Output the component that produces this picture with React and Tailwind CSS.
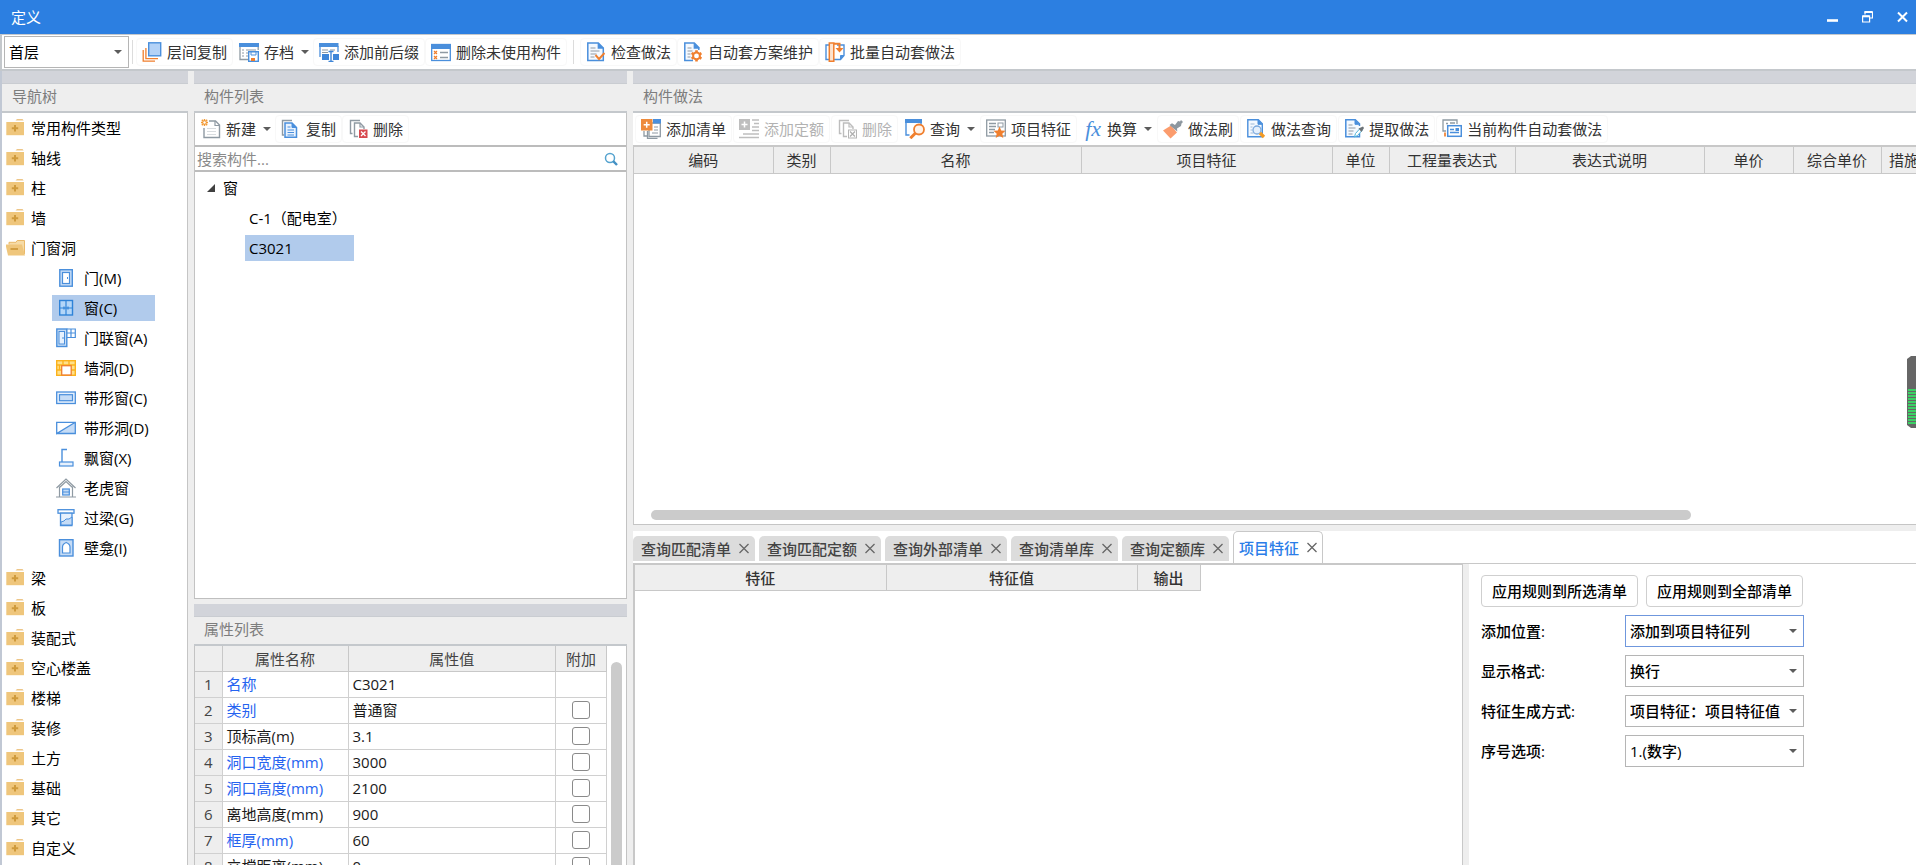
import React from "react";

const B = "#4a8fdc";
const L = "#c6dcf6";
const G = "#8f9aa3";
const O = "#f07f2e";

function Svg({ children, size = 20 }) {
  return (
    <svg width={size} height={size} viewBox={`0 0 ${size} ${size}`} fill="none" aria-hidden="true" className="shrink-0">
      {children}
    </svg>
  );
}

const icons = {
  layers: (
    <Svg>
      <path d="M1.200 8v11.200H13" stroke={O} strokeWidth="1.300" />
      <path d="M3.900 6v10.700H16" stroke={O} strokeWidth="1.300" />
      <rect x="6.700" y=".8" width="12" height="13" fill="#b3d2f7" stroke={B} strokeWidth="1.400" />
    </Svg>
  ),
  archive: (
    <Svg>
      <path d="M1 3v14.500h8M19.200 3v5" stroke={G} strokeWidth="1.300" />
      <rect x="0" y="1" width="20" height="4" fill={B} />
      <path d="M3 8h2M7 8h10M3 11h2M7 11h3M3 14h2M7 14h2" stroke={G} strokeWidth="1.200" />
      <rect x="9.700" y="9.700" width="9.600" height="9.600" fill="#fff" stroke={B} strokeWidth="1.400" />
      <path d="M12 10h5v3h-5z" fill="#fff" stroke={B} />
      <path d="M12 16h4v3h-4z" fill={O} />
    </Svg>
  ),
  affix: (
    <Svg>
      <path d="M1 4v11M19 4v6" stroke={B} strokeWidth="1.300" />
      <rect x="0" y="1" width="19.500" height="4" fill={B} />
      <path d="M3 8h6M11 8h5M3 10.500h6" stroke={G} strokeWidth="1.200" />
      <rect x="3" y="12" width="7" height="6" fill="#3f86d8" />
      <rect x="14" y="12" width="6" height="6" fill="#3f86d8" />
      <path d="M9.500 9.500h5M9.500 19.500h5M12 9.500v10" stroke="#3f86d8" strokeWidth="1.400" />
    </Svg>
  ),
  listDelete: (
    <Svg>
      <rect x=".7" y="2.500" width="18.600" height="16" fill="#fff" stroke={B} strokeWidth="1.300" />
      <rect x="0" y="2" width="20" height="5" fill={B} />
      <path d="M3 9l3 3M6 9l-3 3M3 14l3 3M6 14l-3 3" stroke={O} strokeWidth="1.200" />
      <path d="M9 10.500h8M9 15.500h8" stroke={G} strokeWidth="1.300" />
    </Svg>
  ),
  check: (
    <Svg>
      <path d="M1.800 1h10.500l5 5v12.500H1.800z" fill="#f4f9ff" stroke={B} strokeWidth="1.500" />
      <path d="M12.300 1v5h5" fill={B} stroke={B} strokeWidth="1.300" />
      <path d="M4.500 6h5M4.500 9h9M4.500 12h6M4.500 15h4" stroke={G} strokeWidth="1.200" />
      <path d="M9.500 13l3.500 4 5.500-6" stroke={O} strokeWidth="1.900" />
    </Svg>
  ),
  gear: (
    <Svg>
      <path d="M10 18.500H1.800V1h9.500l4.500 4.500V8" fill="#f4f9ff" stroke={B} strokeWidth="1.500" />
      <path d="M11.300 1v5h5" fill={B} stroke={B} strokeWidth="1.300" />
      <path d="M4.500 6h4M4.500 9h5M4.500 12h3M4.500 15h3" stroke={G} strokeWidth="1.200" />
      <path d="M13.500 8.200v2.300M13.500 17.300v2.300M8.600 11l2 1.200M16.400 15.400l2 1.200M8.600 16.700l2-1.200M16.400 12.300l2-1.200" stroke={O} strokeWidth="2.600" />
      <circle cx="13.500" cy="13.900" r="3.400" fill="#fff" stroke={O} strokeWidth="2" />
    </Svg>
  ),
  batch: (
    <Svg>
      <path d="M4 3H1v14.500h3M12 3h7v10.500l-3.500 4H9" fill="none" stroke={B} strokeWidth="1.400" />
      <path d="M15.500 17.500v-4h3.500" fill={B} stroke={B} />
      <path d="M4.300 19.200V1h4.500v18.200z" fill="#fde3cf" stroke={O} strokeWidth="1.500" />
      <path d="M9 1.800h5.500V7" stroke={O} strokeWidth="2" />
      <path d="M10.500 6h8l-4 4.500z" fill={O} />
    </Svg>
  ),
  create: (
    <Svg>
      <path d="M8 2h6.500l4 4v12.500H3V9" fill="#fff" stroke={G} strokeWidth="1.400" />
      <path d="M14 2v4.500h4.500" stroke={G} strokeWidth="1.200" />
      <path d="M6 9.500h9M6 12.500h9M6 15.500h9" stroke="#d8dcdf" strokeWidth="1.200" />
      <path d="M.8.800l5.400 5.400M6.200.8L.8 6.200M3.500 0v7M0 3.500h7" stroke="#f39a35" strokeWidth="1.400" />
      <circle cx="3.500" cy="3.500" r="1.200" fill="#fff" />
    </Svg>
  ),
  copy: (
    <Svg>
      <path d="M3 16H1.500V1.500H11" stroke={G} strokeWidth="1.400" />
      <path d="M4 4h7l4.500 4.500v9.800H4z" fill="#eaf3fe" stroke={B} strokeWidth="1.500" />
      <path d="M11 4v4.500h4.500" fill={B} stroke={B} />
      <path d="M6.500 8h3M6.500 11h6.500M6.500 13.500h6.500M6.500 16h6.500" stroke={B} strokeWidth="1.200" />
    </Svg>
  ),
  remove: (
    <Svg>
      <path d="M4.500 14.500h-2V1.500H12" stroke={G} strokeWidth="1.400" />
      <path d="M10 17.500H6.500V4H12l4 4v2" fill="#fff" stroke={G} strokeWidth="1.400" />
      <path d="M12 4v4h4" stroke={G} strokeWidth="1.200" />
      <rect x="11" y="10.500" width="8.500" height="8.500" fill="#d7494f" />
      <path d="M13 12.500l4.500 4.500M17.500 12.500L13 17" stroke="#fff" strokeWidth="1.300" />
    </Svg>
  ),
  removeOff: (
    <Svg>
      <path d="M4.500 14.500h-2V1.500H12" stroke="#bdbdbd" strokeWidth="1.400" />
      <path d="M10 17.500H6.500V4H12l4 4v2" fill="#fff" stroke="#bdbdbd" strokeWidth="1.400" />
      <path d="M12 4v4h4" stroke="#bdbdbd" strokeWidth="1.200" />
      <rect x="11.500" y="11" width="8" height="8" fill="#fff" stroke="#b5b5b5" />
      <path d="M13 12.500l5 5M18 12.500l-5 5" stroke="#b0b0b0" strokeWidth="1.300" />
    </Svg>
  ),
  addList: (
    <Svg>
      <path d="M6.500 12v7.300h10M3 12v5h3" stroke={G} strokeWidth="1.300" />
      <path d="M8 4h11.300v13.500H8z" fill="#fff" stroke={G} strokeWidth="1.300" />
      <rect x="12" y="0" width="8" height="4.500" fill={B} />
      <path d="M13 8h4M13 11h4M11 14h6" stroke={G} strokeWidth="1.200" />
      <rect x="0" y="0" width="11.500" height="11.500" fill="#ee8b3c" />
      <path d="M5.700 2.700v6M2.700 5.700h6" stroke="#fff" strokeWidth="1.500" />
    </Svg>
  ),
  addQuota: (
    <Svg>
      <rect x="0" y="0" width="11" height="11" fill="#bebebe" />
      <path d="M5.500 2.500v6M2.500 5.500h6" stroke="#fff" strokeWidth="1.500" />
      <path d="M13 1h7M15 4.500h5M13 8h7M13 11.500h7M4 15h16M0 18.500h20" stroke="#bebebe" strokeWidth="1.400" />
    </Svg>
  ),
  query: (
    <Svg>
      <path d="M1 4v12h3.500M16 4v2" stroke={B} strokeWidth="1.400" />
      <rect x="0" y="0" width="17" height="4" fill={B} />
      <circle cx="14" cy="10.500" r="5" fill="#fff3ea" stroke={O} strokeWidth="1.800" />
      <path d="M10.300 14.200l-5 5" stroke={O} strokeWidth="3" />
    </Svg>
  ),
  feature: (
    <Svg>
      <rect x=".7" y="1" width="18.600" height="16" fill="#fff" stroke={G} strokeWidth="1.300" />
      <path d="M3 4.500h7M3 7.500h7M3 10.500h6M3 13.500h5" stroke={G} strokeWidth="1.300" />
      <rect x="12" y="4" width="5" height="4" stroke={G} />
      <path d="M13.500 7.500l1.700 3.900 4.300.4-3.200 2.900 1 4.300-3.800-2.300-3.800 2.300 1-4.300-3.200-2.900 4.300-.4z" fill={O} />
    </Svg>
  ),
  brush: (
    <Svg>
      <path d="M0 11.500l8-5 6 7-6.500 6z" fill="#fb9c6d" />
      <path d="M6.500 6l2.500-1.800 3 1.800L15 2l2 .5L18 1l2 2-1.500 1.500L18 7l-4 2.500.3 3z" fill="#8d979f" />
    </Svg>
  ),
  methodQuery: (
    <Svg>
      <path d="M1.800.8h10.500l4 4v12.900H1.800z" fill="#f4f9ff" stroke={B} strokeWidth="1.400" />
      <path d="M12 .8v4.500h4.500" fill={B} stroke={B} />
      <path d="M4.500 5h4M4.500 8h2M4.500 11h2M4.500 14h3" stroke="#9db9d8" strokeWidth="1.200" />
      <circle cx="11" cy="11" r="4" fill="#e4effc" stroke="#7ba9dd" strokeWidth="1.300" />
      <path d="M14 14l4 4" stroke="#f39a24" strokeWidth="3.200" />
    </Svg>
  ),
  extract: (
    <Svg>
      <path d="M15.500 14v3.700H1.800V.8h9.500l4.200 4V7" fill="#f4f9ff" stroke={B} strokeWidth="1.500" />
      <path d="M11 .8v4.500h4.500" fill={B} stroke={B} />
      <path d="M4.500 6h4M4.500 9h7M4.500 12h5M4.500 15h4" stroke={G} strokeWidth="1.200" />
      <path d="M10.500 18l1-3.500 4.500-5 2 2-4.500 5z" fill="#fff" stroke="#52b5d8" />
      <path d="M14.500 9.500l4.500-2 1 1.500-2.500 4z" fill="#6b7277" />
    </Svg>
  ),
  current: (
    <Svg>
      <path d="M4 12H1V1h14v4" stroke={G} strokeWidth="1.300" />
      <path d="M4 4.500h2M8 4h5" stroke={G} strokeWidth="1.500" />
      <rect x="5.700" y="6.700" width="13.600" height="10.600" fill="#fff" stroke={B} strokeWidth="1.500" />
      <path d="M8 10.500h4M8 13.500h9" stroke={B} strokeWidth="1.300" />
      <rect x="13.500" y="9" width="3.500" height="3" fill={B} />
      <path d="M3 13.500v4" stroke={O} strokeWidth="1.700" />
    </Svg>
  ),
  door: (
    <Svg>
      <rect x="3.800" y="1.700" width="12.500" height="16.500" fill={L} stroke={B} strokeWidth="1.400" />
      <rect x="6.500" y="4.500" width="7" height="11" fill="#fff" stroke={B} strokeWidth="1.200" />
      <path d="M11.500 9v2" stroke={B} />
    </Svg>
  ),
  window: (
    <Svg>
      <rect x="3.700" y="2.500" width="12.800" height="14.500" fill="#b3d6f8" stroke="#2f83d8" strokeWidth="1.400" />
      <path d="M10 2.500V17M3.700 10h12.800M8 8.500v3M12 8.500v3" stroke="#2f83d8" strokeWidth="1.200" />
    </Svg>
  ),
  doorWindow: (
    <Svg>
      <rect x=".8" y="1" width="10" height="17.500" fill={L} stroke={B} strokeWidth="1.400" />
      <rect x="3" y="3.500" width="5.500" height="12.500" fill="#e7f1fd" stroke={B} />
      <path d="M7 9v2" stroke={B} />
      <path d="M10.800 1h8.500v8.500h-8.500M15 1v8.500M10.800 5h8.500" stroke={B} strokeWidth="1.200" />
    </Svg>
  ),
  wallHole: (
    <Svg>
      <rect x=".7" y="2.700" width="18.600" height="14.600" fill="#ffe08a" stroke="#fbb21c" strokeWidth="1.400" />
      <path d="M0 7h20M0 12h20M7 2.500V7M13 2.500V7M3.500 7v5" stroke="#fbb21c" strokeWidth="1.300" />
      <rect x="5.700" y="7.700" width="9.500" height="9.300" fill="#fff" stroke={O} strokeWidth="1.300" />
    </Svg>
  ),
  stripWindow: (
    <Svg>
      <rect x=".7" y="4" width="18.600" height="11.500" fill="#e7f1fd" stroke={B} strokeWidth="1.300" />
      <rect x="3.500" y="6.700" width="13" height="6" fill={L} stroke={B} strokeWidth="1.200" />
    </Svg>
  ),
  stripHole: (
    <Svg>
      <path d="M19.300 4.300v11.200H.7z" fill={L} />
      <path d="M.7 4.300h18.600v11.200H.7zL.7 15.500 19.300 4.300" stroke={B} strokeWidth="1.300" />
    </Svg>
  ),
  bay: (
    <Svg>
      <path d="M11 1.500H6V14" stroke={B} strokeWidth="1.400" />
      <rect x="3.500" y="14" width="13.500" height="4" fill="#e7f1fd" stroke={B} strokeWidth="1.200" />
    </Svg>
  ),
  dormer: (
    <Svg>
      <path d="M.5 10L10 1l9.500 9M3.500 8.500V19M16.500 8.500V19M0 19h20M3.500 9.500L10 3.500l6.500 6" stroke={G} strokeWidth="1.200" />
      <rect x="6.700" y="11" width="6.600" height="6" fill={L} stroke={B} strokeWidth="1.200" />
      <path d="M6.700 14h6.600" stroke={B} />
    </Svg>
  ),
  lintel: (
    <Svg>
      <rect x="2" y="1.700" width="16" height="3.500" fill="#fff" stroke={B} strokeWidth="1.300" />
      <path d="M4.500 5.200h11.500V17.500H4.500z" fill="#e7f1fd" stroke={B} strokeWidth="1.300" />
      <path d="M5 14l3-1 2-2h3l3-2v8H5z" fill={L} stroke={B} />
    </Svg>
  ),
  niche: (
    <Svg>
      <rect x="3.500" y="1.700" width="13.500" height="16.300" fill={L} stroke={B} strokeWidth="1.400" />
      <path d="M6.500 15V9c0-2.500 2.500-4 3.700-4.500C11.500 5 14 6.500 14 9v6z" fill="#fff" stroke={B} strokeWidth="1.200" />
    </Svg>
  ),
  folder: (
    <Svg>
      <path d="M9.500 2.400L11 1h5.500l1.200 1.400z" fill="#edc688" />
      <path d="M.3 6.500V4H18v13.200H.3z" fill="#efc67c" />
      <path d="M9 7v6.500M5.800 10.200h6.400" stroke="#cf9a3c" strokeWidth="2" />
    </Svg>
  ),
  folderOpen: (
    <Svg>
      <path d="M3 6.500V4.300h7l1.200-1.800h7.300V16" fill="#f6dba6" stroke="#e9b868" />
      <path d="M-.5 6.500H16l3 11H2z" fill="#efc67c" />
      <path d="M4.500 11H12" stroke="#cf9a3c" strokeWidth="1.800" />
    </Svg>
  ),
};

function Caret() {
  return <span className="ml-0.5 h-0 w-0 border-x-[4px] border-t-[4px] border-x-transparent border-t-[#5c5c5c]" />;
}

function Tool({ icon, fx, children, menu, disabled }) {
  return (
    <button
      type="button"
      disabled={disabled}
      className={
        "flex h-7 shrink-0 items-center gap-[5px] whitespace-nowrap rounded border pl-[5px] " +
        (menu ? "border-transparent pr-[3px] " : "border-[#f8f8f8] pr-[5px] ") +
        (disabled ? "text-[#b2b2b2]" : "text-[#333]")
      }
    >
      {fx ? (
        <i className="w-[18px] text-center font-['Liberation_Serif',serif] text-[22px] leading-5 text-[#4a8fdc]">fx</i>
      ) : (
        icons[icon]
      )}
      <span>{children}</span>
      {menu && <Caret />}
    </button>
  );
}

function PanelHead({ children }) {
  return (
    <div className="shrink-0">
      <div className="h-[13px] border-b border-[#c9ccd1] bg-[#d2d4da]" />
      <h2 className="flex h-[27px] items-center bg-[#eee] pb-[3px] pl-2.5 text-[#7d7d7d]">{children}</h2>
      <div className="h-0.5 bg-[#c4c8cc]" />
    </div>
  );
}

function Select({ label, id, value, className }) {
  return (
    <div className={"relative " + className}>
      <select id={id} aria-label={label} className="h-full w-full appearance-none bg-white pl-1 pr-5 outline-none">
        <option>{value}</option>
      </select>
      <span className="pointer-events-none absolute right-1.5 top-1/2 -mt-0.5 h-0 w-0 border-x-[4px] border-t-[4px] border-x-transparent border-t-[#5c5c5c]" />
    </div>
  );
}

const nav = [
  ["常用构件类型"],
  ["轴线"],
  ["柱"],
  ["墙"],
  [
    "门窗洞",
    [
      ["door", "门(M)"],
      ["window", "窗(C)"],
      ["doorWindow", "门联窗(A)"],
      ["wallHole", "墙洞(D)"],
      ["stripWindow", "带形窗(C)"],
      ["stripHole", "带形洞(D)"],
      ["bay", "飘窗(X)"],
      ["dormer", "老虎窗"],
      ["lintel", "过梁(G)"],
      ["niche", "壁龛(I)"],
    ],
  ],
  ["梁"],
  ["板"],
  ["装配式"],
  ["空心楼盖"],
  ["楼梯"],
  ["装修"],
  ["土方"],
  ["基础"],
  ["其它"],
  ["自定义"],
];

const props = [
  ["名称", "C3021", true],
  ["类别", "普通窗", true],
  ["顶标高(m)", "3.1", false],
  ["洞口宽度(mm)", "3000", true],
  ["洞口高度(mm)", "2100", true],
  ["离地高度(mm)", "900", false],
  ["框厚(mm)", "60", true],
  ["立樘距离(mm)", "0", false],
];

const tabs = ["查询匹配清单", "查询匹配定额", "查询外部清单", "查询清单库", "查询定额库", "项目特征"];

const options = [
  ["添加位置:", "添加到项目特征列", "pos"],
  ["显示格式:", "换行", "fmt"],
  ["特征生成方式:", "项目特征：项目特征值", "gen"],
  ["序号选项:", "1.(数字)", "seq"],
];

function NavPanel() {
  return (
    <nav className="flex w-[188px] shrink-0 flex-col border-l-2 border-[#c1c8d4]">
      <PanelHead>导航树</PanelHead>
      <ul className="min-h-0 flex-1 overflow-hidden border-r border-[#c5c5c5] bg-white text-black">
        {nav.map(([name, kids]) => (
          <li key={name}>
            <button type="button" className="flex h-[30px] items-center gap-[5px] pl-1">
              {icons[kids ? "folderOpen" : "folder"]}
              <span>{name}</span>
            </button>
            {kids && (
              <ul>
                {kids.map(([icon, text]) => (
                  <li key={text} className="flex h-[30px] items-center pl-[50px]">
                    <button
                      type="button"
                      className={"flex h-[26px] items-center gap-2 pl-1 " + (icon === "window" ? "w-[103px] bg-[#b1cbec]" : "")}
                    >
                      {icons[icon]}
                      <span>{text}</span>
                    </button>
                  </li>
                ))}
              </ul>
            )}
          </li>
        ))}
      </ul>
    </nav>
  );
}

function ComponentList() {
  return (
    <section className="flex min-h-0 flex-[528] flex-col border-b border-[#bfbfbf]">
      <PanelHead>构件列表</PanelHead>
      <div className="flex min-h-0 flex-1 flex-col border-x border-[#c3c3c3] bg-white">
        <div className="flex h-8 shrink-0 items-center">
          <Tool icon="create" menu>新建</Tool>
          <Tool icon="copy">复制</Tool>
          <Tool icon="remove">删除</Tool>
        </div>
        <div className="flex h-[27px] shrink-0 items-center border-y-2 border-[#bcbcbc] pl-0.5 pr-2">
          <input
            type="text"
            aria-label="搜索构件"
            placeholder="搜索构件..."
            className="min-w-0 flex-1 bg-transparent outline-none placeholder:text-[#8a8a8a]"
          />
          <button type="button" aria-label="搜索">
            <Svg size={14}>
              <circle cx="6" cy="6" r="4.500" stroke="#55a3cf" strokeWidth="1.500" />
              <path d="M9.200 9.200l3.800 3.800" stroke="#4390c4" strokeWidth="2.400" />
            </Svg>
          </button>
        </div>
        <ul className="pt-px text-black">
          <li>
            <div className="flex h-[30px] items-center gap-2 pl-3">
              <svg width="8" height="8" viewBox="0 0 8 8" aria-hidden="true">
                <path d="M8 0v8H0z" fill="#404040" />
              </svg>
              <span>窗</span>
            </div>
            <ul className="pl-[50px]">
              <li className="flex h-[30px] items-center pl-1">C-1（配电室）</li>
              <li className="flex h-[30px] items-center">
                <span className="flex h-[26px] w-[109px] items-center bg-[#b1cbec] pl-1">C3021</span>
              </li>
            </ul>
          </li>
        </ul>
      </div>
    </section>
  );
}

function PropertyList() {
  return (
    <section className="flex min-h-0 flex-[261] flex-col">
      <PanelHead>属性列表</PanelHead>
      <div className="flex min-h-0 flex-1 overflow-hidden border-x border-[#c3c3c3] bg-white">
        <div className="min-w-0 flex-1">
          <table className="w-full table-fixed border-collapse text-[#1a1a1a]">
            <colgroup>
              <col className="w-[27px]" />
              <col className="w-[126px]" />
              <col />
              <col className="w-[51px]" />
            </colgroup>
            <thead>
              <tr className="h-[25px] bg-[#eee] text-[#444]">
                {["", "属性名称", "属性值", "附加"].map((h, i) => (
                  <th key={i} className="border-b border-r border-[#c8c8c8] p-0 font-normal">{h}</th>
                ))}
              </tr>
            </thead>
            <tbody>
              {props.map(([name, value, blue], i) => (
                <tr key={name} className="h-[26px]">
                  <td className="border-b border-r border-[#d0d0d0] bg-[#eee] p-0 text-center text-[#444]">{i + 1}</td>
                  <td className={"border-b border-r border-[#d0d0d0] p-0 pl-1 " + (blue ? "text-[#2563f0]" : "")}>{name}</td>
                  <td className="border-b border-r border-[#d0d0d0] p-0 pl-1">{value}</td>
                  <td className="border-b border-r border-[#d0d0d0] p-0">
                    {i > 0 && (
                      <input
                        type="checkbox"
                        aria-label={name}
                        className="mx-auto block h-[18px] w-[18px] appearance-none rounded-[3px] border border-[#8a8a8a] bg-white"
                      />
                    )}
                  </td>
                </tr>
              ))}
            </tbody>
          </table>
        </div>
        <div className="flex w-[19px] shrink-0 justify-center pt-4">
          <div className="w-[11px] rounded-t-full bg-[#cbcbcb]" />
        </div>
      </div>
    </section>
  );
}

const methodCols = [
  ["编码", "w-[139px]"],
  ["类别", "w-[57px]"],
  ["名称", "w-[251px]"],
  ["项目特征", "w-[251px]"],
  ["单位", "w-[57px]"],
  ["工程量表达式", "w-[126px]"],
  ["表达式说明", "w-[189px]"],
  ["单价", "w-[89px]"],
  ["综合单价", "w-[88px]"],
  ["措施项目", "w-[76px]"],
];

function MethodPanel() {
  return (
    <section className="flex min-h-0 flex-[454] flex-col border-b border-[#c5c5c5]">
      <PanelHead>构件做法</PanelHead>
      <div className="flex h-8 shrink-0 items-center gap-px overflow-hidden bg-white pl-0.5">
        <Tool icon="addList">添加清单</Tool>
        <Tool icon="addQuota" disabled>添加定额</Tool>
        <Tool icon="removeOff" disabled>删除</Tool>
        <Tool icon="query" menu>查询</Tool>
        <Tool icon="feature">项目特征</Tool>
        <Tool fx menu>换算</Tool>
        <Tool icon="brush">做法刷</Tool>
        <Tool icon="methodQuery">做法查询</Tool>
        <Tool icon="extract">提取做法</Tool>
        <Tool icon="current">当前构件自动套做法</Tool>
      </div>
      <div className="flex min-h-0 flex-1 flex-col justify-between overflow-hidden border-l border-t-2 border-[#c8c8c8] bg-white">
        <table className="w-max table-fixed border-collapse text-[#333]">
          <thead>
            <tr className="h-[26px] bg-[#eee]">
              {methodCols.map(([name, w]) => (
                <th key={name} className={"overflow-hidden whitespace-nowrap border-b border-r border-[#c8c8c8] p-0 font-normal " + w}>
                  {name}
                </th>
              ))}
            </tr>
          </thead>
        </table>
        <div className="mb-1 px-[17px]">
          <div className="h-2.5 w-5/6 rounded-full bg-[#cbcbcb]" />
        </div>
      </div>
    </section>
  );
}

function FeaturePanel() {
  return (
    <section className="flex min-h-0 flex-[334] flex-col bg-white font-medium">
      <div role="tablist" className="flex h-8 shrink-0 items-end gap-1">
        {tabs.map((t, i) => {
          const on = i === tabs.length - 1;
          return (
            <div
              key={t}
              className={
                "flex shrink-0 items-center gap-2 rounded-t-[5px] " +
                (on ? "h-8 border border-b-0 border-[#c8c8c8] px-[5px] text-[#2a7de8]" : "mb-0.5 h-[25px] bg-[#dcdcdc] pl-2 pr-1.5 text-[#444]")
              }
            >
              <button type="button" role="tab" aria-selected={on}>{t}</button>
              <button type="button" aria-label={"关闭" + t}>
                <svg width="10" height="11" viewBox="0 0 10 11" stroke="#666" strokeWidth="1.300" aria-hidden="true">
                  <path d="M.5 1l9 9M9.500 1l-9 9" />
                </svg>
              </button>
            </div>
          );
        })}
      </div>
      <div className="flex min-h-0 flex-1 border-t border-[#c8c8c8]">
        <div className="min-w-0 flex-1 overflow-hidden border-l-2 border-r border-t border-[#c8c8c8]">
          <table className="table-fixed border-collapse text-[#333]">
            <thead>
              <tr className="h-[25px] bg-[#eee]">
                <th className="w-[251px] border-b border-r border-[#c8c8c8] p-0 font-medium">特征</th>
                <th className="w-[251px] border-b border-r border-[#c8c8c8] p-0 font-medium">特征值</th>
                <th className="w-[63px] border-b border-r border-[#c8c8c8] p-0 font-medium">输出</th>
              </tr>
            </thead>
          </table>
        </div>
        <div className="w-1.5 shrink-0 bg-[#eee]" />
        <form className="flex w-[447px] shrink-0 flex-col gap-2 pl-3 pt-[11px] text-black">
          <div className="flex gap-2">
            <button type="button" className="h-8 w-[157px] rounded border border-[#cfcfcf]">应用规则到所选清单</button>
            <button type="button" className="h-8 w-[157px] rounded border border-[#cfcfcf]">应用规则到全部清单</button>
          </div>
          {options.map(([label, value, id], i) => (
            <div key={id} className="flex h-8 items-center">
              <label htmlFor={id} className="w-36">{label}</label>
              <Select
                id={id}
                value={value}
                className={"h-8 w-[179px] border " + (i === 0 ? "border-[#6f97dd]" : "border-[#b5b5b5]")}
              />
            </div>
          ))}
        </form>
      </div>
    </section>
  );
}

export default function App() {
  return (
    <div className="relative flex h-screen flex-col overflow-hidden bg-[#eee] font-['Open_Sans','Noto_Sans_CJK_SC',sans-serif] text-[15px] leading-5">
      <header className="flex h-[34px] shrink-0 items-center justify-between bg-[#2c7fe1] pl-[11px] pr-2 text-white">
        <h1>定义</h1>
        <div className="flex items-center gap-6">
          <button type="button" aria-label="最小化">
            <svg width="11" height="12" viewBox="0 0 11 12" aria-hidden="true"><path d="M0 9.500h11" stroke="#fff" strokeWidth="2.600" /></svg>
          </button>
          <button type="button" aria-label="还原">
            <svg width="11" height="12" viewBox="0 0 11 12" fill="none" stroke="#fff" aria-hidden="true">
              <path d="M3 3.500V1h7.500v6H8" strokeWidth="1.200" />
              <path d="M2.500 1h8" strokeWidth="2" />
              <path d="M.6 5h7v6h-7z" strokeWidth="1.200" />
              <path d="M.6 5.300h7" strokeWidth="2" />
            </svg>
          </button>
          <button type="button" aria-label="关闭">
            <svg width="11" height="12" viewBox="0 0 11 12" stroke="#fff" strokeWidth="2" aria-hidden="true"><path d="M1 1.500l9 9M10 1.500l-9 9" /></svg>
          </button>
        </div>
      </header>

      <div className="flex h-[37px] shrink-0 items-center border-b-2 border-l-2 border-t border-[#c4c8cc] bg-white">
        <Select id="floor" label="楼层" value="首层" className="ml-0.5 h-8 w-[125px] shrink-0 border border-[#b5b5b5] text-black" />
        <div className="mx-[3px] h-6 w-px bg-[#dcdcdc]" />
        <Tool icon="layers">层间复制</Tool>
        <Tool icon="archive" menu>存档</Tool>
        <Tool icon="affix">添加前后缀</Tool>
        <Tool icon="listDelete">删除未使用构件</Tool>
        <div className="mx-1.5 h-6 w-px bg-[#dcdcdc]" />
        <Tool icon="check">检查做法</Tool>
        <Tool icon="gear">自动套方案维护</Tool>
        <Tool icon="batch">批量自动套做法</Tool>
      </div>

      <main className="flex min-h-0 flex-1">
        <NavPanel />
        <div className="w-1.5 shrink-0" />
        <div className="flex w-[433px] shrink-0 flex-col gap-[5px]">
          <ComponentList />
          <PropertyList />
        </div>
        <div className="w-1.5 shrink-0" />
        <div className="flex min-w-0 flex-1 flex-col gap-1.5">
          <MethodPanel />
          <FeaturePanel />
        </div>
      </main>

      <svg className="absolute right-0 top-[356px]" width="9" height="72" viewBox="0 0 9 72" aria-hidden="true">
        <path d="M9 0H4L0 3v66l4 3h5z" fill="#666" />
        {Array.from({ length: 12 }, (_, i) => (
          <rect key={i} x="1" y={33 + i * 3} width="8" height="2" fill="#3bd165" />
        ))}
      </svg>
    </div>
  );
}
